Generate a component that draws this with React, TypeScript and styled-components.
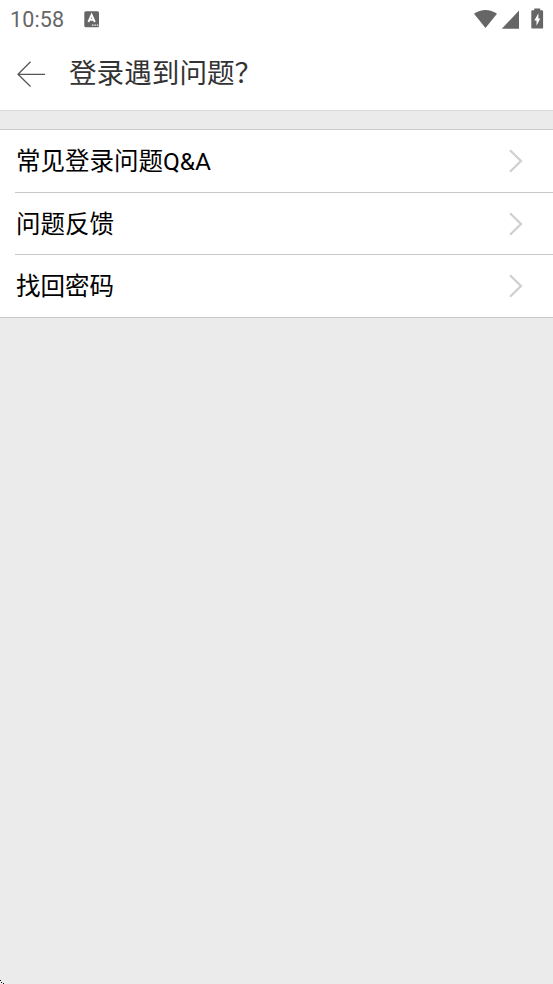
import React from "react";
import styled, { createGlobalStyle } from "styled-components";

const GlobalStyle = createGlobalStyle`
  * { box-sizing: border-box; }
  html, body { margin: 0; background: #ebebeb; }
  body { font-family: Roboto, "Noto Sans CJK SC", sans-serif; overflow: hidden; }
`;

const Screen = styled.div`
  position: relative;
  display: flex;
  flex-direction: column;
  height: 984px;
  background: #ebebeb;
`;

const StatusBar = styled.div`
  display: flex;
  align-items: center;
  height: 37px;
  padding: 1px 9px 0 10px;
  background: #fff;
  color: #666;
`;

const Clock = styled.time`
  font-size: 21.5px;
  line-height: 26px;
  letter-spacing: 0.15px;
  width: 74px;
  padding-top: 2px;
`;

const StatusIcons = styled.div`
  display: flex;
  margin-left: auto;
`;

const Icon = styled.svg`
  display: block;
  flex: none;
`;

const Header = styled.header`
  display: flex;
  align-items: center;
  height: 74px;
  padding: 0 16px 0;
  background: #fff;
  border-bottom: 1px solid #d9d9d9;
`;

const BackButton = styled.button`
  display: flex;
  width: 53px;
  padding: 1px 0 0;
  border: 0;
  background: none;
`;

const Title = styled.h1`
  margin: 0;
  font-size: 27.6px;
  line-height: 40px;
  font-weight: 400;
  color: #333;
  white-space: nowrap;
`;

const List = styled.ul`
  list-style: none;
  margin: 18px 0 0;
  padding: 0 0 0 15px;
  background: #fff;
  border: solid #c9c9c9;
  border-width: 1px 0;
`;

const Row = styled.li<{ $height: number }>`
  display: flex;
  align-items: center;
  justify-content: space-between;
  height: ${(p) => p.$height}px;
  padding-right: 30px;
  font-size: 24.5px;
  line-height: 36px;
  color: #000;
  &:not(:last-child) { border-bottom: 1px solid #c9c9c9; }
`;

const Label = styled.span`
  padding: 2px 0 0 1px;
`;

const Corner = styled(Icon)`
  position: absolute;
  left: 0;
  bottom: 0;
`;

const rows = [
  { label: "常见登录问题Q&A", height: 63 },
  { label: "问题反馈", height: 62 },
  { label: "找回密码", height: 62 },
];

export default function App() {
  return (
    <Screen>
      <GlobalStyle />
      <StatusBar>
        <Clock>10:58</Clock>
        <Icon width="16" height="17" viewBox="0 0 16 17">
          <rect x="0.3" y="0.2" width="14.7" height="16" rx="1.5" fill="#666" />
          <path d="M4.4 11 7.6 3.8 10.8 11M5.5 8.7h4.2" fill="none" stroke="#fff" strokeWidth="1.9" />
          <path d="M8 14.1h1.4M10.4 14.1h1.4M12.8 14.1h1.4" stroke="#fff" strokeWidth="1.2" />
        </Icon>
        <StatusIcons>
          <Icon width="71" height="22" viewBox="473 7 71 22">
            <path d="M474 12.8C480.8 7.6 490.2 7.6 497 12.8L485.5 27Z" fill="#666" />
            <path d="M519 9.5V27.8H501.8Z" fill="#666" />
            <path d="M534.2 7.6h6v1.6h1.8q1.1 0 1.1 1.1v16.1q0 1.2-1.2 1.2h-9.4q-1.2 0-1.2-1.2V10.3q0-1.1 1.1-1.1h1.8Z" fill="#666" />
            <path d="M538.4 12.2 534.3 19.4H536.5V24.7L540.3 17.5H538.4Z" fill="#fff" />
          </Icon>
        </StatusIcons>
      </StatusBar>
      <Header>
        <BackButton aria-label="返回">
          <Icon width="30" height="28" viewBox="16 60 30 28">
            <path d="M30.5 61.7 18 74.3 30.5 86.5M18 74.3H45" fill="none" stroke="#555" strokeWidth="1.25" />
          </Icon>
        </BackButton>
        <Title>登录遇到问题？</Title>
      </Header>
      <List>
        {rows.map((row) => (
          <Row key={row.label} $height={row.height}>
            <Label>{row.label}</Label>
            <Icon width="14" height="24" viewBox="0 0 14 24">
              <path d="M1 1.2 12 12 1 22.8" fill="none" stroke="#d0d0d0" strokeWidth="2.3" />
            </Icon>
          </Row>
        ))}
      </List>
      <Corner width="4" height="4" viewBox="0 0 4 4" shapeRendering="crispEdges">
        <path d="M0 0h1v1H0ZM1 2h1v1H1ZM3 3h1v1H3Z" fill="#111" />
      </Corner>
    </Screen>
  );
}
